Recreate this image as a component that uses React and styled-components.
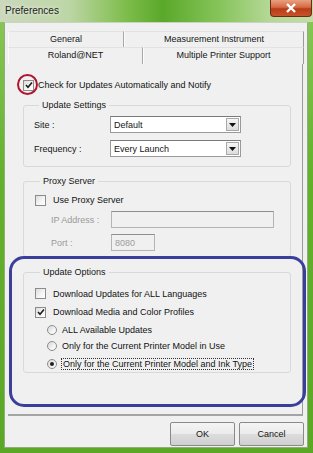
import React from "react";
import styled, { createGlobalStyle } from "styled-components";

const GlobalStyle = createGlobalStyle`
  html, body {
    margin: 0;
    padding: 0;
  }
  body {
    font-family: "Liberation Sans", Arial, sans-serif;
    font-size: 9px;
    color: #111;
  }
`;

const Window = styled.div`
  width: 313px;
  height: 453px;
  display: flex;
  flex-direction: column;
  background: linear-gradient(180deg, #8cc85a 0%, #62b02c 40%, #5aa826 100%);
  overflow: hidden;
`;

const TitleBar = styled.div`
  height: 22px;
  flex: none;
  display: flex;
  justify-content: space-between;
  align-items: flex-start;
  background: linear-gradient(
    90deg,
    #cbd8bd 0%,
    #bdd6a6 22%,
    #7fbd4c 40%,
    #5aa82a 52%,
    #86c45a 70%,
    #b4d896 86%,
    #c2dca8 100%
  );
`;

const Title = styled.div`
  font-size: 10px;
  line-height: 22px;
  padding-left: 5px;
  color: #1b1b1b;
  text-shadow: 0 0 4px rgba(255, 255, 255, 0.9);
`;

const CloseButton = styled.div`
  width: 40px;
  height: 16px;
  margin-right: 1px;
  display: flex;
  align-items: center;
  justify-content: center;
  border: 1px solid #6a2a14;
  border-top: none;
  border-radius: 0 0 4px 4px;
  background: linear-gradient(180deg, #e8a080 0%, #d66a42 45%, #b83c18 55%, #c8522a 100%);
`;

const Client = styled.div`
  flex: 1;
  margin: 0 5px 5px 4px;
  padding: 8px 3px 1px 3px;
  display: flex;
  flex-direction: column;
  background: #f0f0f0;
  border: 1px solid #8fae7a;
  border-top-color: #c9d4c0;
`;

const TabStrip = styled.div`
  display: flex;
  flex-direction: column;
`;

const TabRow = styled.div`
  display: grid;
  grid-template-columns: ${(p) => p.$cols};
  height: ${(p) => p.$height}px;
`;

const Tab = styled.div`
  display: flex;
  align-items: center;
  justify-content: center;
  padding-bottom: 2px;
  border-top: 1px solid #e2e2e2;
  border-right: 1px solid ${(p) => (p.$edge ? "#9a9a9a" : "#a8a8a8")};
  border-left: 1px solid #fbfbfb;
  color: #151515;
`;

const Panel = styled.div`
  position: relative;
  flex: 1;
  display: flex;
  flex-direction: column;
  padding: 13px 11px 0 15px;
  border-right: 1px solid #9a9a9a;
  border-bottom: 2px solid #a4a4a4;
  margin-right: 1px;
`;

const CheckRow = styled.label`
  position: relative;
  display: flex;
  align-items: center;
  gap: ${(p) => p.$gap || 7}px;
  height: ${(p) => p.$height || 16}px;
  padding-left: ${(p) => p.$indent || 0}px;
`;

const Box = styled.span`
  width: 9px;
  height: 9px;
  flex: none;
  border: 1px solid #8c8c8c;
  background: linear-gradient(135deg, #dcdcdc 0%, #f6f6f6 60%, #ffffff 100%);
  display: flex;
  align-items: center;
  justify-content: center;
`;

const Radio = styled.span`
  width: 8px;
  height: 8px;
  flex: none;
  border-radius: 50%;
  border: 1px solid #8c8c8c;
  background: linear-gradient(135deg, #d8d8d8 0%, #f7f7f7 70%);
  display: flex;
  align-items: center;
  justify-content: center;

  &::after {
    content: "";
    width: 4px;
    height: 4px;
    border-radius: 50%;
    background: ${(p) => (p.$on ? "#202020" : "transparent")};
  }
`;

const Focus = styled.span`
  outline: 1px dotted #333;
  outline-offset: 0;
  padding: 0 1px;
`;

const RedCircle = styled.span`
  position: absolute;
  left: -6px;
  top: -3px;
  width: 17px;
  height: 17px;
  border: 2px solid #b0142e;
  border-radius: 50%;
  pointer-events: none;
`;

const Group = styled.fieldset`
  margin: ${(p) => p.$top}px 0 0 0;
  padding: ${(p) => p.$pad};
  border: 1px solid #d6dadd;
  border-radius: 3px;
  display: flex;
  flex-direction: column;
  gap: ${(p) => p.$gap || 0}px;
  min-width: 0;
`;

const Legend = styled.legend`
  padding: 0 3px;
  margin-left: 5px;
  line-height: 11px;
  color: #151515;
`;

const FieldRow = styled.div`
  display: grid;
  grid-template-columns: ${(p) => p.$label}px auto;
  align-items: center;
  height: 17px;
  padding-left: ${(p) => p.$indent || 0}px;
  color: ${(p) => (p.$disabled ? "#9a9a9a" : "#151515")};
`;

const Select = styled.div`
  width: 131px;
  height: 17px;
  box-sizing: border-box;
  display: flex;
  align-items: center;
  justify-content: space-between;
  background: #fff;
  border: 1px solid #9a9a9a;
  border-top-color: #7a7a7a;
  padding-left: 3px;
  padding-right: 1px;
`;

const DropButton = styled.span`
  width: 13px;
  height: 13px;
  display: flex;
  align-items: center;
  justify-content: center;
  background: linear-gradient(180deg, #f6f6f6, #dcdcdc);
  border: 1px solid #a9a9a9;
  box-sizing: border-box;
`;

const TextBox = styled.div`
  width: ${(p) => p.$width}px;
  height: 17px;
  box-sizing: border-box;
  border: 1px solid #b4b4b4;
  border-top-color: #8e8e8e;
  background: #f0f0f0;
  padding-left: 3px;
  display: flex;
  align-items: center;
  color: #9c9c9c;
`;

const Spacer = styled.div`
  flex: 1;
`;

const BlueFrame = styled.div`
  position: absolute;
  left: 1px;
  top: 192px;
  width: 291px;
  height: 145px;
  border: 3px solid #3b3f9c;
  border-radius: 15px;
  pointer-events: none;
`;

const ButtonBar = styled.div`
  display: flex;
  justify-content: flex-end;
  gap: 4px;
  padding: 6px 0 0 0;
`;

const Button = styled.div`
  width: 65px;
  height: 24px;
  box-sizing: border-box;
  display: flex;
  align-items: center;
  justify-content: center;
  border: 1px solid #8a8a8a;
  border-radius: 2px;
  background: linear-gradient(180deg, #f4f4f4 0%, #ebebeb 50%, #dcdcdc 51%, #d0d0d0 100%);
  color: #151515;
`;

const Check = () => (
  <svg width="8" height="8" viewBox="0 0 8 8">
    <path d="M1 4 L3 6.2 L7 1.5" fill="none" stroke="#1c1c1c" strokeWidth="1.6" />
  </svg>
);

const Arrow = () => (
  <svg width="7" height="4" viewBox="0 0 7 4">
    <path d="M0 0 H7 L3.5 4 Z" fill="#111" />
  </svg>
);

function CheckBox({ checked }) {
  return <Box>{checked && <Check />}</Box>;
}

export default function App() {
  return (
    <>
      <GlobalStyle />
      <Window>
        <TitleBar>
          <Title>Preferences</Title>
          <CloseButton>
            <svg width="12" height="10" viewBox="0 0 12 10">
              <path d="M2 1 L10 9 M10 1 L2 9" stroke="#fff" strokeWidth="2.4" />
            </svg>
          </CloseButton>
        </TitleBar>

        <Client>
          <TabStrip>
            <TabRow $cols="116px 1fr" $height={16}>
              <Tab>General</Tab>
              <Tab $edge>Measurement Instrument</Tab>
            </TabRow>
            <TabRow $cols="135px 1fr" $height={17}>
              <Tab>Roland@NET</Tab>
              <Tab $edge>Multiple Printer Support</Tab>
            </TabRow>
          </TabStrip>

          <Panel>
            <CheckRow $gap={4} $height={16}>
              <CheckBox checked />
              <RedCircle />
              Check for Updates Automatically and Notify
            </CheckRow>

            <Group $top={7} $pad="5px 10px 9px 10px" $gap={7}>
              <Legend>Update Settings</Legend>
              <FieldRow $label={76}>
                <span>Site :</span>
                <Select>
                  Default
                  <DropButton>
                    <Arrow />
                  </DropButton>
                </Select>
              </FieldRow>
              <FieldRow $label={76}>
                <span>Frequency :</span>
                <Select>
                  Every Launch
                  <DropButton>
                    <Arrow />
                  </DropButton>
                </Select>
              </FieldRow>
            </Group>

            <Group $top={9} $pad="8px 10px 5px 11px" $gap={6}>
              <Legend>Proxy Server</Legend>
              <CheckRow $height={10}>
                <CheckBox />
                Use Proxy Server
              </CheckRow>
              <FieldRow $label={60} $indent={16} $disabled>
                <span>IP Address :</span>
                <TextBox $width={163} />
              </FieldRow>
              <FieldRow $label={60} $indent={16} $disabled>
                <span>Port :</span>
                <TextBox $width={44}>8080</TextBox>
              </FieldRow>
            </Group>

            <Group $top={10} $pad="7px 10px 0 11px" $gap={2}>
              <Legend>Update Options</Legend>
              <CheckRow $height={17}>
                <CheckBox />
                Download Updates for ALL Languages
              </CheckRow>
              <CheckRow $height={16}>
                <CheckBox checked />
                Download Media and Color Profiles
              </CheckRow>
              <CheckRow $height={15} $indent={12} $gap={5}>
                <Radio />
                ALL Available Updates
              </CheckRow>
              <CheckRow $height={14} $indent={12} $gap={5}>
                <Radio />
                Only for the Current Printer Model in Use
              </CheckRow>
              <CheckRow $height={17} $indent={12} $gap={5}>
                <Radio $on />
                <Focus>Only for the Current Printer Model and Ink Type</Focus>
              </CheckRow>
            </Group>

            <Spacer />
            <BlueFrame />
          </Panel>

          <ButtonBar>
            <Button>OK</Button>
            <Button>Cancel</Button>
          </ButtonBar>
        </Client>
      </Window>
    </>
  );
}
